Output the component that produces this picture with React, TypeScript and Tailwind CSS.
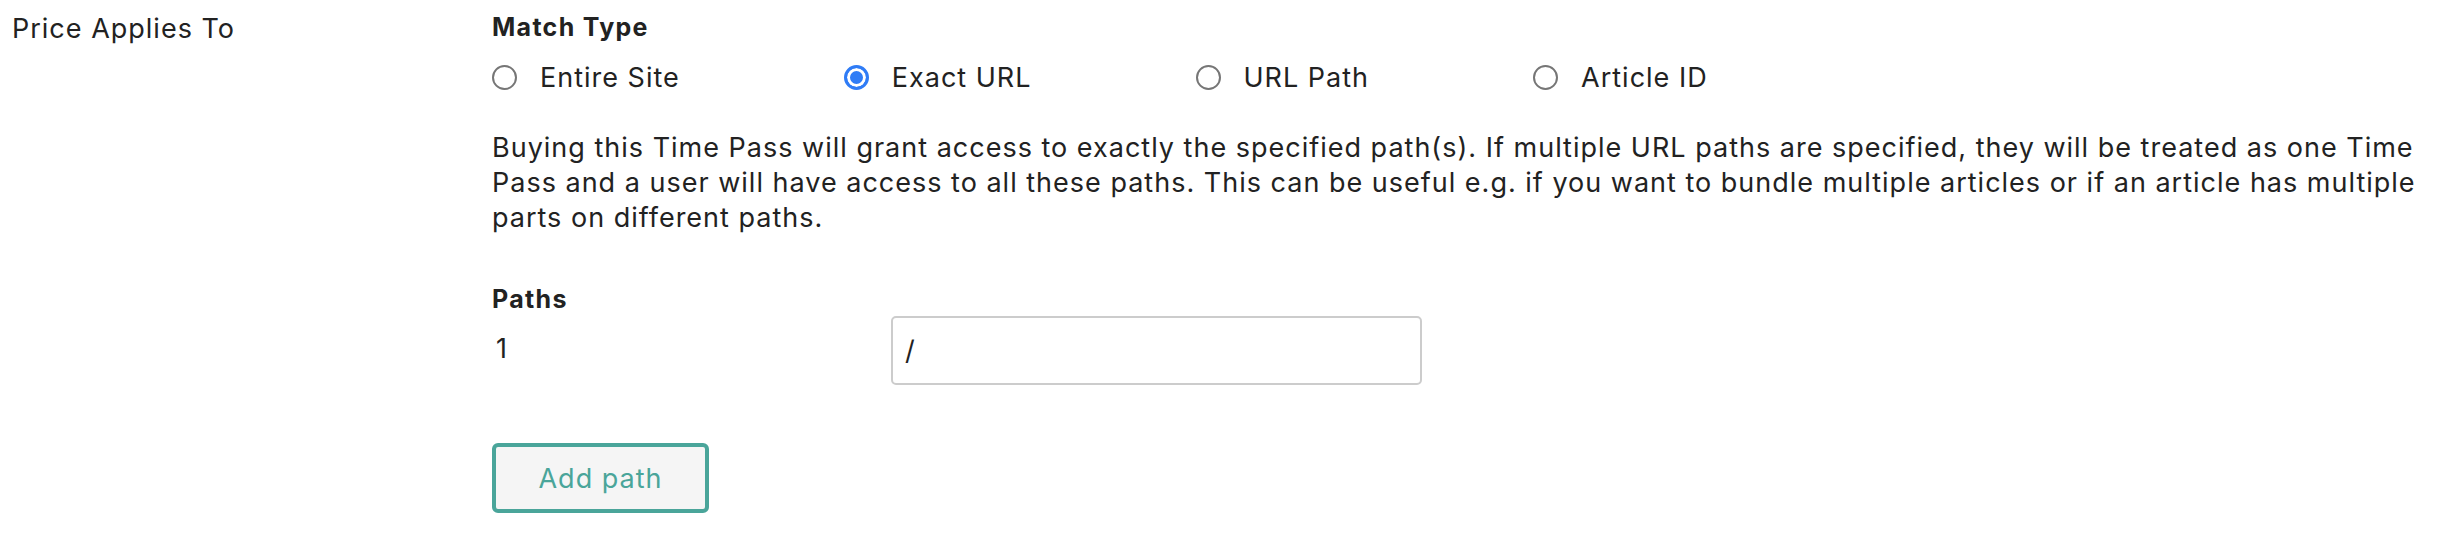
import React from 'react';

const options = [
    { id: 'site', label: 'Entire Site' },
    { id: 'exact', label: 'Exact URL' },
    { id: 'path', label: 'URL Path' },
    { id: 'article', label: 'Article ID' },
];

function RadioOption({ label, checked }: { label: string; checked?: boolean }) {
    return (
        <label className="flex items-center gap-[23px]">
            <input
                type="radio"
                name="match-type"
                defaultChecked={checked}
                className="h-[25px] w-[25px] shrink-0 appearance-none rounded-full border-2 border-[#767676] bg-white checked:border-[3px] checked:border-[#2f7cf6] checked:bg-[#2f7cf6] checked:shadow-[inset_0_0_0_3px_#ffffff]"
            />
            <span>{label}</span>
        </label>
    );
}

export default function App() {
    return (
        <div className="flex min-h-[536px] bg-white font-['Inter',sans-serif] text-[27px] leading-[35px] tracking-[1px] text-[#222]">
            <div className="w-[492px] shrink-0 pl-[12px] pt-[11px]">Price Applies To</div>

            <div className="min-w-0 flex-1 pr-[25px] pt-[11px]">
                <h3 className="text-[25px] font-bold leading-[32px] tracking-[1.3px]">Match Type</h3>

                <div className="mt-[17px] flex items-center gap-[164px]">
                    {options.map((o) => (
                        <RadioOption key={o.id} label={o.label} checked={o.id === 'exact'} />
                    ))}
                </div>

                <p className="mt-[35px]">
                    Buying this Time Pass will grant access to exactly the specified path(s). If multiple URL paths are
                    specified, they will be treated as one Time Pass and a user will have access to all these paths. This
                    can be useful e.g. if you want to bundle multiple articles or if an article has multiple parts on
                    different paths.
                </p>

                <h3 className="mt-[48px] text-[25px] font-bold leading-[32px] tracking-[1.3px]">Paths</h3>

                <div className="mt-[1px] flex items-start">
                    <div className="w-[399px] shrink-0 pl-[4px] pt-[15px]">1</div>
                    <input
                        type="text"
                        defaultValue="/"
                        className="h-[69px] w-[531px] rounded-[5px] border-2 border-[#cccccc] px-[12px] text-[27px] text-[#222] outline-none"
                    />
                </div>

                <button
                    type="button"
                    className="mt-[58px] h-[70px] w-[217px] rounded-[6px] border-4 border-[#4aa59a] bg-[#f5f5f5] text-[27px] text-[#4aa59a]"
                >
                    Add path
                </button>
            </div>
        </div>
    );
}
